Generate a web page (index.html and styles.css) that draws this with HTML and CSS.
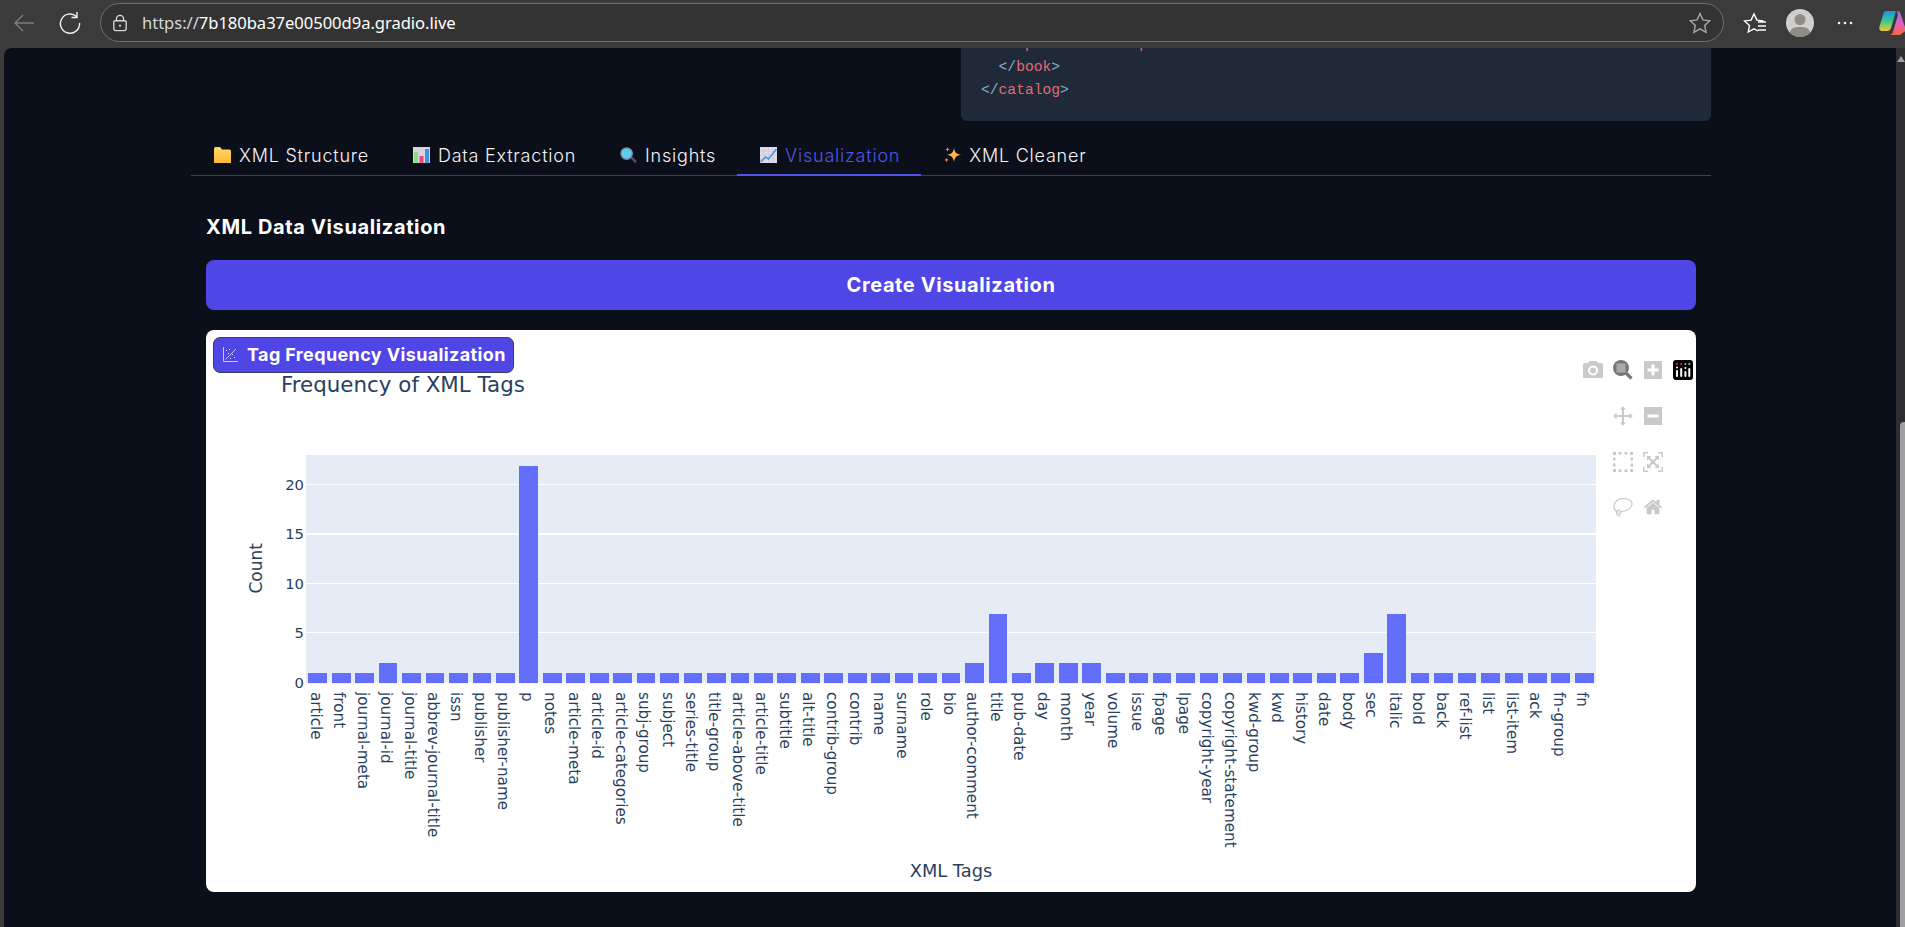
FILE: index.html
```html
<!DOCTYPE html>
<html lang="en">
<head>
<meta charset="utf-8">
<title>XML Data Visualization</title>
<link rel="stylesheet" href="styles.css">
</head>
<body>
<header class="chrome">
  <svg class="ic back" viewBox="0 0 24 24"><path d="M22 12H3M11 4l-8 8 8 8"/></svg>
  <svg class="ic reload" viewBox="0 0 24 24"><path d="M18.5 5.5A9.6 9.6 0 1 0 21.600 12M19 1v5.500h-5.500"/></svg>
  <div class="address">
    <svg class="ic lock" viewBox="0 0 18 20"><path d="M5 8V5.500a4 4 0 0 1 8 0V8M3.500 7.500h11a1.500 1.500 0 0 1 1.500 1.500v7a2.500 2.500 0 0 1-2.500 2.500h-9A2.500 2.500 0 0 1 2 16V9a1.500 1.500 0 0 1 1.500-1.500z"/><circle class="lock-dot" cx="9" cy="13" r="1.200"/></svg>
    <span class="url"><span class="url-scheme">https://</span>7b180ba37e00500d9a.gradio.live</span>
    <svg class="ic star" viewBox="0 0 22 22"><path d="M11 1.500l2.900 6.400 6.900.8-5.100 4.700 1.400 6.900-6.100-3.500-6.100 3.500 1.400-6.900L1.200 8.700l6.900-.8z"/></svg>
  </div>
  <svg class="ic fav" viewBox="0 0 24 24"><path d="M15 20l-4-2.200-5.800 3.200 1.300-6.600L1.500 9.900l6.600-.8L11 3l2.900 6.100 6.600.8M15 11h8M15 15h8M15 19h8"/></svg>
  <svg class="avatar" viewBox="0 0 28 28"><circle cx="14" cy="14" r="14" fill="#d1cfcb"/><circle cx="14" cy="10.500" r="5.500" fill="#8f8b86"/><path d="M3.800 23.500C5 19 9 18 14 18s9 1 10.200 5.500A14 14 0 0 1 14 28a14 14 0 0 1-10.200-4.500z" fill="#8f8b86"/></svg>
  <svg class="dots" viewBox="0 0 16 4"><circle cx="2" cy="2" r="1.300"/><circle cx="8" cy="2" r="1.300"/><circle cx="14" cy="2" r="1.300"/></svg>
  <svg class="copilot" viewBox="0 0 28 26">
    <defs>
      <linearGradient id="cpa" x1="0" y1="0" x2="0" y2="1"><stop offset="0" stop-color="#1f8fe8"/><stop offset=".5" stop-color="#38c98a"/><stop offset="1" stop-color="#f5c732"/></linearGradient>
      <linearGradient id="cpb" x1="0" y1="0" x2="0" y2="1"><stop offset="0" stop-color="#a66df0"/><stop offset=".6" stop-color="#e860b0"/><stop offset="1" stop-color="#f4683a"/></linearGradient>
    </defs>
    <path d="M7 1h10l-5 17c-.6 2-2 3-4 3H4c-3 0-4.300-2-3.500-4.500L4 5c.6-2.500 1-4 3-4z" fill="url(#cpa)"/>
    <path d="M18 1c2 0 3 1 3.500 3L26 17c.8 2.500 1 4-1 5l-4 3H10c2 0 3.500-1 4-3L19 5z" fill="url(#cpb)"/>
  </svg>
</header>

<div class="viewport">
  <main class="page">
    <div class="container">
      <div class="top-row">
        <div class="top-left"></div>
        <pre class="code"><code class="code-inner">    <span class="pn">&lt;</span><span class="tg">price</span><span class="pn">&gt;</span>10.99<span class="pn">&lt;/</span><span class="tg">price</span><span class="pn">&gt;</span>
  <span class="pn">&lt;/</span><span class="tg">book</span><span class="pn">&gt;</span>
<span class="pn">&lt;/</span><span class="tg">catalog</span><span class="pn">&gt;</span></code></pre>
      </div>

      <nav class="tabs">
        <button class="tab">
          <svg class="emoji" viewBox="0 0 17 16"><defs><linearGradient id="fo" x1="0" y1="0" x2="0" y2="1"><stop offset="0" stop-color="#ffd862"/><stop offset="1" stop-color="#fdb93d"/></linearGradient></defs><path d="M0 1.500A1.500 1.500 0 0 1 1.500 0h4.500l2 2.500h7.500A1.500 1.500 0 0 1 17 4v12H0z" fill="url(#fo)"/></svg>
          XML Structure
        </button>
        <button class="tab">
          <svg class="emoji" viewBox="0 0 17 16"><rect width="17" height="16" fill="#d9d5de"/><rect x="1" y="5" width="4" height="11" fill="#86dc8b"/><rect x="6.500" y="9" width="4" height="7" fill="#e9487d"/><rect x="12" y="2" width="4" height="14" fill="#3f94e0"/></svg>
          Data Extraction
        </button>
        <button class="tab">
          <svg class="emoji" viewBox="0 0 18 17"><path class="emoji-handle" d="M12 11l5 5"/><circle cx="7" cy="7" r="6" fill="#5fcdf0" stroke="#7090a8" stroke-width="1.500"/></svg>
          Insights
        </button>
        <button class="tab active">
          <svg class="emoji" viewBox="0 0 17 16"><rect width="17" height="16" fill="#e0dbe8"/><path class="emoji-grid" d="M0 4h17M0 8h17M0 12h17M4 0v16M8.500 0v16M13 0v16"/><path class="emoji-line" d="M.5 15l5-5 3 2L16.500 2"/></svg>
          Visualization
        </button>
        <button class="tab">
          <svg class="emoji" viewBox="0 0 17 16"><path d="M10 1c.7 4.300 2.300 6 7 6.800-4.700.9-6.300 2.600-7 7.200-.7-4.600-2.300-6.300-7-7.200C7.700 7 9.300 5.300 10 1z" fill="#fdb84a"/><path d="M3.500 0c.2 1.500.8 2.100 2.200 2.400C4.300 2.700 3.700 3.300 3.500 4.900c-.2-1.600-.8-2.200-2.200-2.500C2.700 2.100 3.300 1.500 3.500 0zM2.500 10.500c.2 1.500.8 2.100 2.200 2.400-1.400.3-2 .9-2.200 2.500-.2-1.600-.8-2.200-2.200-2.500 1.400-.3 2-.9 2.200-2.400z" fill="#f08a4a"/></svg>
          XML Cleaner
        </button>
      </nav>

      <section class="panel">
        <h3 class="panel-title">XML Data Visualization</h3>
        <button class="primary">Create Visualization</button>

        <div class="card">
          <div class="badge">
            <svg class="badge-icon" viewBox="0 0 15 15"><path d="M.5 0v14.500H15M2.500 12.500L13 2"/><path class="badge-dots" d="M3 3h1v1H3zM6 2h1v1H6zM5 6h1v1H5zM9 7h1v1H9zM11 10h1v1h-1zM7 11h1v1H7z"/></svg>
            Tag Frequency Visualization
          </div>

          <div class="modebar">
            <svg class="mb" viewBox="0 0 20 20"><path fill-rule="evenodd" d="M1.500 3H5l1.500-2h7L15 3h3.500A1.500 1.500 0 0 1 20 4.500v12a1.500 1.500 0 0 1-1.500 1.500h-17A1.500 1.500 0 0 1 0 16.500v-12A1.500 1.500 0 0 1 1.500 3zM10 5.500a5 5 0 1 0 0 10 5 5 0 0 0 0-10zM10 7.500a3 3 0 1 1 0 6 3 3 0 0 1 0-6z"/></svg>
            <svg class="mb on" viewBox="0 0 20 20"><circle cx="8" cy="8" r="8"/><path class="zoom-handle" d="M12.500 12.500l6 6"/><rect class="zoom-box" x="3.500" y="3.500" width="9" height="9"/></svg>
            <svg class="mb" viewBox="0 0 20 20"><path fill-rule="evenodd" d="M1 1h18v18H1zM8.500 4.500v4h-4v3h4v4h3v-4h4v-3h-4v-4z"/></svg>
            <svg class="mb logo" viewBox="0 0 20 20"><rect width="20" height="20" rx="3" fill="#000"/><g fill="#fff"><rect x="3" y="10" width="2" height="7" rx="1"/><rect x="7.200" y="8" width="2" height="9" rx="1"/><rect x="11.400" y="11" width="2" height="6" rx="1"/><rect x="15.300" y="8" width="2" height="9" rx="1"/></g><circle cx="4" cy="4" r="1.100" fill="#e8246c"/><circle cx="8.200" cy="4" r="1.100" fill="#e8246c"/><circle cx="12.400" cy="4" r="1.100" fill="#9a9fc0"/><circle cx="16.300" cy="4" r="1.100" fill="#3fd0e0"/><circle cx="4" cy="7.500" r="1" fill="#fff"/><circle cx="12.400" cy="8" r="1" fill="#fff"/></svg>

            <span class="mb-gap"></span>
            <svg class="mb" viewBox="0 0 20 20"><path d="M10 0l3 3.500h-2v5.500h5.500V7l3.500 3-3.500 3v-2H11v5.500h2L10 20l-3-3.500h2V11H3.500v2L0 10l3.500-3v2H9V3.500H7z"/></svg>
            <svg class="mb" viewBox="0 0 20 20"><path fill-rule="evenodd" d="M1 1h18v18H1zM4.500 8.500v3h11v-3z"/></svg>
            <span class="mb-gap"></span>

            <span class="mb-gap"></span>
            <svg class="mb" viewBox="0 0 20 20"><path d="M0 0h3v3H0zM5.500 0h3v2.500h-3zM11.500 0h3v2.500h-3zM17 0h3v3h-3zM0 5.500h2.500v3H0zM17.500 5.500H20v3h-2.500zM0 11.500h2.500v3H0zM17.500 11.500H20v3h-2.500zM0 17h3v3H0zM5.500 17.500h3V20h-3zM11.500 17.500h3V20h-3zM17 17h3v3h-3z"/></svg>
            <svg class="mb" viewBox="0 0 20 20"><path d="M0 0h5v1.500H1.500V5H0zM15 0h5v5h-1.500V1.500H15zM0 15h1.500v3.500H5V20H0zM18.500 15H20v5h-5v-1.500h3.500zM4 4h4.500L7 5.500 10 8.500l3-3L11.500 4H16v4.500L14.500 7 11.500 10l3 3 1.500-1.500V16h-4.500l1.500-1.500-3-3-3 3L8.500 16H4v-4.500L5.500 13l3-3-3-3L4 8.500z"/></svg>
            <span class="mb-gap"></span>

            <span class="mb-gap"></span>
            <svg class="mb lasso" viewBox="0 0 20 20"><path d="M6 15.500C2.500 14.500 1 12.500 1 9.500 1 5 5 1.500 10.500 1.500S19.500 4 19 7.500c-.5 4-5.500 7-11 7M5 13c2 0 3.500 1.500 2.500 3.500S4 18.500 3.500 16.500 4 13.500 5 13zM6.500 17l-.8 2.800"/></svg>
            <svg class="mb" viewBox="0 0 928.6 1000"><path transform="matrix(1 0 0 -1 0 850)" d="m786 296v-267q0-15-11-26t-25-10h-214v214h-143v-214h-214q-15 0-25 10t-11 26v267q0 1 0 2t0 2l321 264 321-264q1-1 1-4z m124 39l-34-41q-5-5-12-6h-2q-7 0-12 3l-386 322-386-322q-7-4-13-4-7 2-12 7l-35 41q-4 5-3 13t6 12l401 334q18 15 42 15t43-15l136-114v109q0 8 5 13t13 5h107q8 0 13-5t5-13v-227l122-102q5-5 6-12t-4-13z"/></svg>
            <span class="mb-gap"></span>
          </div>

          <h4 class="chart-title">Frequency of XML Tags</h4>

          <div class="chart">
            <div class="y-axis">
              <span class="y-title">Count</span>
              <div class="y-ticks"><span class="tick">0</span><span class="tick">5</span><span class="tick">10</span><span class="tick">15</span><span class="tick">20</span></div>
            </div>
            <div class="plot">
              <i class="bar" style="height:9.9px"></i><i class="bar" style="height:9.9px"></i><i class="bar" style="height:9.9px"></i><i class="bar" style="height:19.7px"></i><i class="bar" style="height:9.9px"></i><i class="bar" style="height:9.9px"></i><i class="bar" style="height:9.9px"></i><i class="bar" style="height:9.9px"></i><i class="bar" style="height:9.9px"></i><i class="bar" style="height:216.5px"></i><i class="bar" style="height:9.9px"></i><i class="bar" style="height:9.9px"></i><i class="bar" style="height:9.9px"></i><i class="bar" style="height:9.9px"></i><i class="bar" style="height:9.9px"></i><i class="bar" style="height:9.9px"></i><i class="bar" style="height:9.9px"></i><i class="bar" style="height:9.9px"></i><i class="bar" style="height:9.9px"></i><i class="bar" style="height:9.9px"></i><i class="bar" style="height:9.9px"></i><i class="bar" style="height:9.9px"></i><i class="bar" style="height:9.9px"></i><i class="bar" style="height:9.9px"></i><i class="bar" style="height:9.9px"></i><i class="bar" style="height:9.9px"></i><i class="bar" style="height:9.9px"></i><i class="bar" style="height:9.9px"></i><i class="bar" style="height:19.7px"></i><i class="bar" style="height:68.9px"></i><i class="bar" style="height:9.9px"></i><i class="bar" style="height:19.7px"></i><i class="bar" style="height:19.7px"></i><i class="bar" style="height:19.7px"></i><i class="bar" style="height:9.9px"></i><i class="bar" style="height:9.9px"></i><i class="bar" style="height:9.9px"></i><i class="bar" style="height:9.9px"></i><i class="bar" style="height:9.9px"></i><i class="bar" style="height:9.9px"></i><i class="bar" style="height:9.9px"></i><i class="bar" style="height:9.9px"></i><i class="bar" style="height:9.9px"></i><i class="bar" style="height:9.9px"></i><i class="bar" style="height:9.9px"></i><i class="bar" style="height:29.5px"></i><i class="bar" style="height:68.9px"></i><i class="bar" style="height:9.9px"></i><i class="bar" style="height:9.9px"></i><i class="bar" style="height:9.9px"></i><i class="bar" style="height:9.9px"></i><i class="bar" style="height:9.9px"></i><i class="bar" style="height:9.9px"></i><i class="bar" style="height:9.9px"></i><i class="bar" style="height:9.9px"></i>
            </div>
            <div class="x-labels">
              <span>article</span><span>front</span><span>journal-meta</span><span>journal-id</span><span>journal-title</span><span>abbrev-journal-title</span><span>issn</span><span>publisher</span><span>publisher-name</span><span>p</span><span>notes</span><span>article-meta</span><span>article-id</span><span>article-categories</span><span>subj-group</span><span>subject</span><span>series-title</span><span>title-group</span><span>article-above-title</span><span>article-title</span><span>subtitle</span><span>alt-title</span><span>contrib-group</span><span>contrib</span><span>name</span><span>surname</span><span>role</span><span>bio</span><span>author-comment</span><span>title</span><span>pub-date</span><span>day</span><span>month</span><span>year</span><span>volume</span><span>issue</span><span>fpage</span><span>lpage</span><span>copyright-year</span><span>copyright-statement</span><span>kwd-group</span><span>kwd</span><span>history</span><span>date</span><span>body</span><span>sec</span><span>italic</span><span>bold</span><span>back</span><span>ref-list</span><span>list</span><span>list-item</span><span>ack</span><span>fn-group</span><span>fn</span>
            </div>
            <div class="x-title">XML Tags</div>
          </div>
        </div>
      </section>
    </div>
  </main>
  <aside class="scrollbar">
    <span class="scroll-arrow"></span>
    <span class="scroll-thumb"></span>
  </aside>
</div>
</body>
</html>
```

FILE: styles.css
```css
* { box-sizing: border-box; }
html, body { margin: 0; height: 100%; }
body {
  display: flex;
  flex-direction: column;
  overflow: hidden;
  background: #3b3b3b;
  font-family: "Inter", "Liberation Sans", sans-serif;
}

/* Browser chrome */
.chrome {
  flex: none;
  height: 48px;
  display: flex;
  align-items: center;
  padding: 3px 0 6px 12px;
  background: #3b3b3b;
  overflow: hidden;
  position: relative;
  z-index: 2;
}
.ic { fill: none; stroke: #fff; stroke-width: 1.4; flex: none; }
.back { width: 24px; height: 24px; stroke: #7d7d7d; }
.reload { width: 24px; height: 24px; margin-left: 22px; stroke: #f0f0f0; }
.address {
  flex: 1;
  height: 39px;
  margin-left: 18px;
  display: flex;
  align-items: center;
  padding: 0 12px 0 11px;
  background: #333333;
  border: 1.5px solid #6e6e6e;
  border-radius: 20px;
}
.lock { width: 16px; height: 18px; stroke: #d8d8d8; stroke-width: 1.5; }
.lock-dot { fill: #d8d8d8; stroke: none; }
.url {
  margin-left: 14px;
  font: 400 16.6px "Noto Sans", "Open Sans", sans-serif;
  color: #fff;
  letter-spacing: -0.05px;
}
.url-scheme { color: #d6d6d6; }
.star { width: 22px; height: 22px; margin-left: auto; stroke: #a8a8a8; }
.fav { width: 24px; height: 24px; margin-left: 19px; }
.avatar { width: 28px; height: 28px; margin-left: 19px; flex: none; }
.dots { width: 16px; height: 4px; margin-left: 23px; flex: none; fill: #f2f2f2; }
.copilot { width: 28px; height: 26px; margin-left: 26px; margin-right: -2px; flex: none; }

/* Page */
.viewport { flex: 1; min-height: 0; display: flex; }
.page {
  flex: 1;
  min-width: 0;
  margin-left: 4px;
  background: #0b0f19;
  border-top-left-radius: 8px;
  overflow: hidden;
}
.container { width: 1520px; margin: 0 0 0 187px; }

.top-row { display: grid; grid-template-columns: 770px 750px; }
.code {
  margin: -15.5px 0 0;
  padding: 0 0 19px 20px;
  background: #1f2937;
  border-radius: 0 0 6px 6px;
  color: #f3f4f6;
  font: 400 14.65px/23px "Liberation Mono", monospace;
}
.code-inner { font: inherit; }
.tg { color: #e06c75; }
.pn { color: #7eaed3; }

/* Tabs */
.tabs {
  display: flex;
  height: 39px;
  margin-top: 16px;
  border-bottom: 1px solid #374151;
}
.tab {
  height: 39px;
  display: flex;
  align-items: center;
  gap: 8px;
  padding: 0 21px 0 23px;
  border: 0;
  border-bottom: 2px solid transparent;
  background: none;
  color: #f3f4f6;
  font: 300 18px "Inter", sans-serif;
  letter-spacing: 0.78px;
  white-space: nowrap;
}
.tab.active { color: #4f57e8; border-bottom-color: #5155ea; }
.emoji { width: 17px; height: 16px; flex: none; }
.emoji-handle { stroke: #6a3f7c; stroke-width: 2.600; fill: none; }
.emoji-grid { stroke: #c4bdd2; stroke-width: .5; fill: none; }
.emoji-line { stroke: #3f94e0; stroke-width: 1.500; fill: none; }

/* Panel */
.panel { padding: 0 15px; }
.panel-title {
  margin: 0;
  padding-top: 39px;
  height: 84px;
  font: 700 20px/24px "Inter", sans-serif;
  letter-spacing: 0.63px;
  color: #fff;
}
.primary {
  display: block;
  width: 1490px;
  height: 50px;
  border: 0;
  border-radius: 8px;
  background: #4f46e5;
  color: #fff;
  font: 700 20px "Inter", sans-serif;
  letter-spacing: 0.6px;
}

/* Plot card */
.card {
  position: relative;
  width: 1490px;
  height: 562px;
  margin-top: 20px;
  padding-top: 45px;
  background: #fff;
  border-radius: 8px;
  color: #2a3f5f;
  font-family: "DejaVu Sans", Verdana, sans-serif;
}
.badge {
  position: absolute;
  top: 7px;
  left: 7px;
  width: 301px;
  height: 36px;
  display: flex;
  align-items: center;
  gap: 9px;
  padding-left: 9px;
  background: #4f46e5;
  border: 1px solid #3b3f58;
  border-radius: 7px;
  color: #fff;
  font: 700 18px "Inter", sans-serif;
  letter-spacing: 0.37px;
  white-space: nowrap;
}
.badge-icon { width: 15px; height: 15px; flex: none; fill: none; stroke: #e8e6ff; stroke-width: .8; }
.badge-dots { fill: #e8e6ff; stroke: none; }

.modebar {
  position: absolute;
  top: 18px;
  right: 0;
  display: grid;
  grid-template-columns: repeat(4, 26px);
  grid-auto-rows: 45.7px;
  column-gap: 4px;
  place-items: center;
}
.mb { width: 20px; height: 20px; fill: #c9c9c9; }
.mb.on { fill: #777; }
.zoom-handle { stroke: #777; stroke-width: 3.2; fill: none; }
.zoom-box { fill: #a9a9a9; }
.mb.lasso { fill: none; stroke: #c9c9c9; stroke-width: 1.2; }

.chart-title {
  margin: 0 0 60px 75px;
  height: 20px;
  font: 400 21.4px/20px "DejaVu Sans", Verdana, sans-serif;
  color: #2a3f5f;
}
.chart {
  display: grid;
  grid-template-columns: 100px 1290px;
  grid-template-rows: 228px 170px 34px;
}
.y-axis { display: flex; justify-content: flex-end; }
.y-title {
  margin-right: 14px;
  align-self: center;
  writing-mode: vertical-rl;
  transform: rotate(180deg);
  font-size: 17px;
  line-height: 20px;
}
.y-ticks {
  display: flex;
  flex-direction: column-reverse;
  gap: 49.5px;
  width: 26px;
  padding-right: 2px;
  text-align: right;
  font-size: 14.8px;
}
.tick { display: block; height: 0; line-height: 0; }

.plot {
  display: grid;
  grid-template-columns: repeat(55, minmax(0, 1fr));
  align-items: end;
  background-color: #e5ecf6;
  background-image: repeating-linear-gradient(to top, #fff 0 1px, transparent 1px 49.5px);
}
.bar {
  display: block;
  margin: 0 2.35px;
  background: #636efa;
  box-shadow: 0 0 0 .5px #e5ecf6;
}
.x-labels {
  grid-column: 2;
  display: grid;
  grid-template-columns: repeat(55, minmax(0, 1fr));
  padding-top: 9px;
  align-items: start;
  justify-items: center;
  font-size: 15.2px;
  line-height: 16px;
}
.x-labels span {
  writing-mode: vertical-rl;
  white-space: nowrap;
  margin-right: 4px;
}
.x-title {
  grid-column: 2;
  text-align: center;
  font-size: 17.8px;
  line-height: 34px;
  margin-top: 1px;
}

/* Scrollbar */
.scrollbar {
  flex: none;
  width: 9px;
  display: flex;
  flex-direction: column;
  background: #2e2e2e;
}
.scroll-arrow {
  margin: 8px 0 0 1px;
  width: 0;
  height: 0;
  border-left: 4px solid transparent;
  border-right: 4px solid transparent;
  border-bottom: 6px solid #9f9f9f;
}
.scroll-thumb {
  margin: auto 0 0 4px;
  height: 505px;
  background: #9f9f9f;
  border-top-left-radius: 4px;
}
```
